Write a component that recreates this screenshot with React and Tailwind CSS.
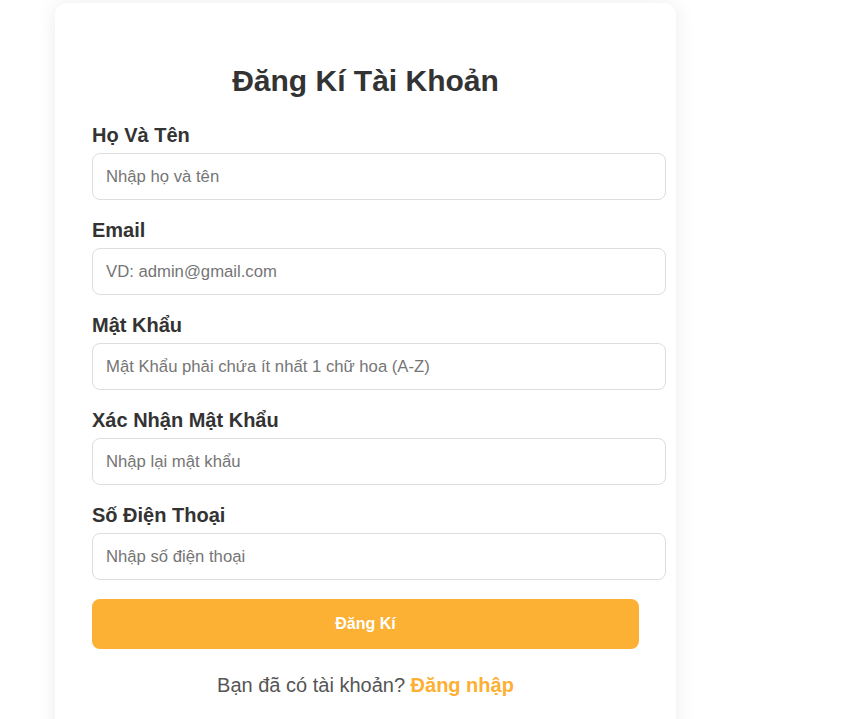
import React from "react";

const fields = [
  { label: "Họ Và Tên", placeholder: "Nhập họ và tên", type: "text" },
  { label: "Email", placeholder: "VD: admin@gmail.com", type: "email" },
  { label: "Mật Khẩu", placeholder: "Mật Khẩu phải chứa ít nhất 1 chữ hoa (A-Z)", type: "password" },
  { label: "Xác Nhận Mật Khẩu", placeholder: "Nhập lại mật khẩu", type: "password" },
  { label: "Số Điện Thoại", placeholder: "Nhập số điện thoại", type: "tel" },
];

export default function App() {
  return (
    <div
      className="h-screen bg-white overflow-hidden"
      style={{ fontFamily: '"Liberation Sans", Arial, sans-serif' }}
    >
      <div className="ml-[55px] mt-[3px] w-[621px] h-[760px] bg-white rounded-xl shadow-[0_0_20px_rgba(0,0,0,0.08)] px-[37px] pt-[61px]">
        <h2 className="text-center text-[30px] font-bold text-[#333] leading-[34px]">Đăng Kí Tài Khoản</h2>
        <form className="mt-[26px]" onSubmit={(e) => e.preventDefault()}>
          {fields.map((f) => (
            <div key={f.label} className="mb-[19px]">
              <label className="block text-[20px] font-bold text-[#333] leading-[23px] mb-[6px]">{f.label}</label>
              <input
                type={f.type}
                placeholder={f.placeholder}
                className="block w-[574px] h-[47px] px-[13px] text-[16.7px] text-[#333] placeholder:text-[#757575] border border-[#ddd] rounded-lg outline-none"
              />
            </div>
          ))}
          <button
            type="submit"
            className="block w-[547px] h-[50px] mt-[3px] bg-[#fcb034] text-white text-[16px] font-bold rounded-lg"
          >
            Đăng Kí
          </button>
        </form>
        <p className="mt-[21px] text-center text-[20px] text-[#555]">
          Bạn đã có tài khoản? <a href="#" className="font-bold text-[#fcb034]">Đăng nhập</a>
        </p>
      </div>
    </div>
  );
}
